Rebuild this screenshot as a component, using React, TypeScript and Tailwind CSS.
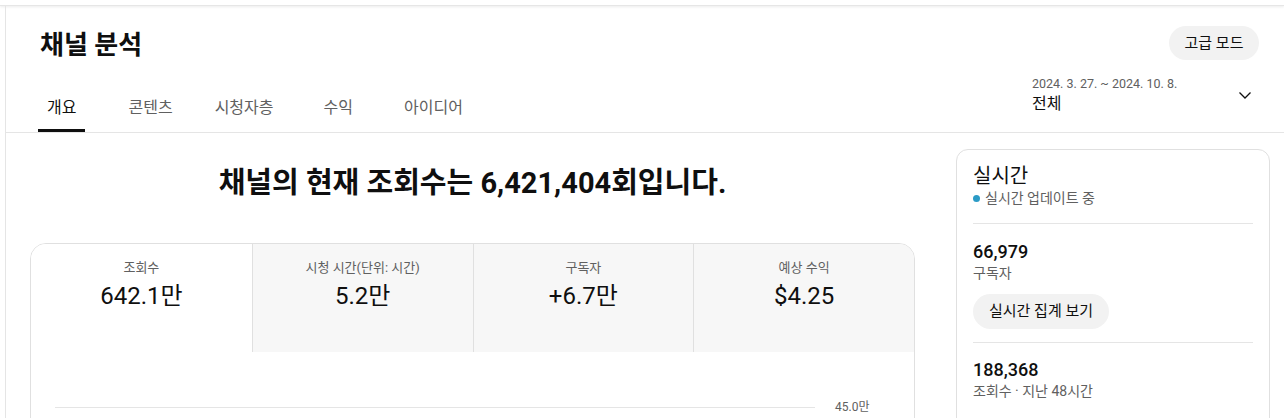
import React from "react";

const font = { fontFamily: 'Roboto, "Noto Sans CJK KR", "Noto Sans", sans-serif' };

const tabs = [
  { label: "개요", ml: "ml-0", active: true },
  { label: "콘텐츠", ml: "ml-[34px]" },
  { label: "시청자층", ml: "ml-[24px]" },
  { label: "수익", ml: "ml-[32px]" },
  { label: "아이디어", ml: "ml-[33px]" },
];

const metrics = [
  { label: "조회수", value: "642.1만", active: true },
  { label: "시청 시간(단위: 시간)", value: "5.2만" },
  { label: "구독자", value: "+6.7만" },
  { label: "예상 수익", value: "$4.25" },
];

export default function App() {
  return (
    <div className="w-[1284px] h-[418px] overflow-hidden bg-white text-[#0f0f0f]" style={font}>
      {/* top bar shadow */}
      <div className="h-[6px] border-b border-[#e6e6e6] shadow-[0_1px_3px_rgba(0,0,0,0.08)]" />

      <div className="ml-[5px] border-l border-[#e5e5e5] h-[412px]">
        {/* Header */}
        <header className="flex justify-between border-b border-[#e5e5e5]">
          <div>
            <h1 className="pl-[34px] pt-[23px] text-[26px] leading-[32px] font-bold">채널 분석</h1>
            <nav className="flex mt-[23px] pl-[32px]">
              {tabs.map((t) => (
                <div
                  key={t.label}
                  className={`relative h-[48px] px-[9px] flex items-center text-[16px] ${t.ml} ${
                    t.active ? "text-[#0f0f0f]" : "text-[#606060]"
                  }`}
                >
                  {t.label}
                  {t.active && <div className="absolute left-0 right-0 bottom-0 h-[3px] bg-[#0f0f0f]" />}
                </div>
              ))}
            </nav>
          </div>

          <div className="flex flex-col items-end pr-[25px] pt-[20px]">
            <button className="h-[34px] w-[90px] rounded-full bg-[#f2f2f2] text-[15px] text-[#0f0f0f]">
              고급 모드
            </button>
            <div className="mt-[16px] w-[227px] flex items-center justify-between">
              <div>
                <div className="text-[12.5px] leading-[16px] text-[#606060]">2024. 3. 27. ~ 2024. 10. 8.</div>
                <div className="text-[16px] leading-[20px] mt-[2px]">전체</div>
              </div>
              <svg width="24" height="24" viewBox="0 0 24 24" className="mr-[2px]">
                <path d="M6.5 9.5 12 15l5.5-5.5" fill="none" stroke="#0f0f0f" strokeWidth="1.3" />
              </svg>
            </div>
          </div>
        </header>

        {/* Body */}
        <div className="flex">
          <div className="ml-[24px] w-[885px]">
            <h2 className="mt-[32px] text-center text-[29px] leading-[36px] font-bold">
              채널의 현재 조회수는 6,421,404회입니다.
            </h2>

            <div className="mt-[42px] h-[220px] rounded-t-2xl border border-[#e0e0e0] overflow-hidden">
              <div className="grid grid-cols-4 h-[108px]">
                {metrics.map((m, i) => (
                  <div
                    key={m.label}
                    className={`flex flex-col items-center pt-[16px] ${
                      m.active ? "bg-white" : "bg-[#f7f7f7]"
                    } ${i > 0 ? "border-l border-[#e0e0e0]" : ""}`}
                  >
                    <div className="text-[13px] leading-[16px] text-[#606060]">{m.label}</div>
                    <div className="mt-[4px] text-[24px] leading-[32px]">{m.value}</div>
                  </div>
                ))}
              </div>
              <div className="flex items-center pl-[24px] mt-[47px]">
                <div className="w-[760px] h-px bg-[#e5e5e5]" />
                <div className="ml-[20px] text-[12px] leading-[16px] text-[#606060]">45.0만</div>
              </div>
            </div>
          </div>

          {/* Realtime panel */}
          <aside className="ml-[41px] mt-[16px] w-[314px] h-[300px] rounded-xl border border-[#e0e0e0] px-[16px]">
            <div className="pt-[13px] text-[20px] leading-[26px]">실시간</div>
            <div className="flex items-center text-[14px] leading-[18px] text-[#606060]">
              <span className="w-[7px] h-[7px] rounded-full bg-[#2b9bc6] mr-[5px]" />
              실시간 업데이트 중
            </div>
            <div className="mt-[16px] h-px bg-[#e5e5e5]" />

            <div className="mt-[16px] text-[18px] leading-[24px] font-medium">66,979</div>
            <div className="text-[14px] leading-[18px] text-[#606060]">구독자</div>
            <button className="mt-[12px] h-[35px] w-[136px] rounded-full bg-[#f2f2f2] text-[15px] text-[#0f0f0f]">
              실시간 집계 보기
            </button>
            <div className="mt-[13px] h-px bg-[#e5e5e5]" />

            <div className="mt-[15px] text-[18px] leading-[24px] font-medium">188,368</div>
            <div className="text-[14px] leading-[18px] text-[#606060]">조회수 · 지난 48시간</div>
          </aside>
        </div>
      </div>
    </div>
  );
}
